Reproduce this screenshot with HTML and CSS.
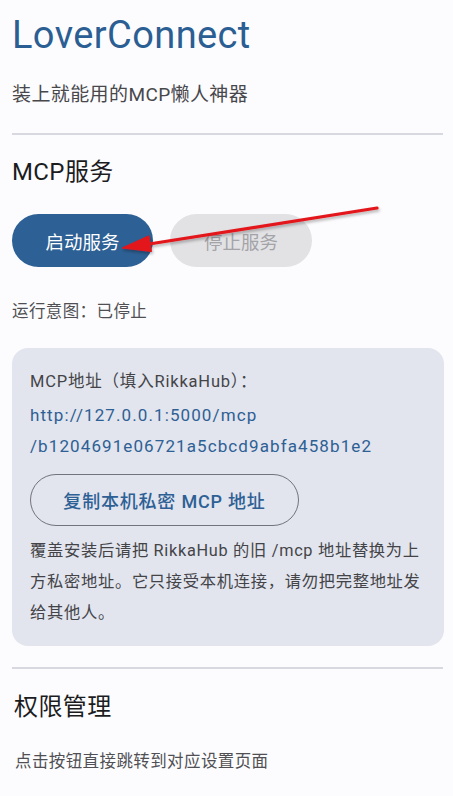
FILE: index.html
```html
<!DOCTYPE html>
<html lang="zh-CN">
<head>
    <meta charset="UTF-8">
    <meta name="viewport" content="width=device-width, initial-scale=1.0">
    <title>LoverConnect</title>
    <link rel="stylesheet" href="styles.css">
</head>
<body>
    <div class="page">
        <h1 class="app-title">LoverConnect</h1>
        <p class="app-sub">装上就能用的MCP懒人神器</p>
        <hr class="divider">

        <h2 class="section-title">MCP服务</h2>
        <div class="btn-row">
            <button class="btn btn-start">启动服务</button>
            <button class="btn btn-stop" disabled>停止服务</button>
        </div>
        <p class="status">运行意图：已停止</p>

        <div class="card">
            <div class="card-label">MCP地址（填入RikkaHub）：</div>
            <div class="card-url">http://127.0.0.1:5000/mcp<wbr>/b1204691e06721a5cbcd9abfa458b1e2</div>
            <button class="btn-outline">复制本机私密 MCP 地址</button>
            <p class="card-note">覆盖安装后请把 RikkaHub 的旧 /mcp 地址替换为上方私密地址。它只接受本机连接，请勿把完整地址发给其他人。</p>
        </div>

        <hr class="divider divider-2">

        <h2 class="section-title perm-title">权限管理</h2>
        <p class="status perm-hint">点击按钮直接跳转到对应设置页面</p>

        <!-- annotation arrow drawn over the screenshot -->
        <svg class="arrow" width="453" height="796" viewBox="0 0 453 796">
            <defs>
                <filter id="shadow" x="-10%" y="-50%" width="120%" height="200%">
                    <feDropShadow dx="1" dy="2" stdDeviation="1.5" flood-color="#000" flood-opacity="0.3"/>
                </filter>
            </defs>
            <g filter="url(#shadow)" fill="#e3161b" stroke="#e3161b">
                <line x1="377" y1="208" x2="146" y2="244.5" stroke-width="3.2" stroke-linecap="round"/>
                <polygon points="122,248 151.5,251.5 148.8,235.8" stroke-width="1" stroke-linejoin="round"/>
            </g>
        </svg>
    </div>
</body>
</html>
```

FILE: styles.css
```css
* {
    box-sizing: border-box;
}
body {
    margin: 0;
    background: #fcfcfe;
    font-family: Roboto, "Noto Sans CJK SC", sans-serif;
    color: #1c1c1e;
}
.page {
    position: relative;
    padding: 12px 9px 0 12px;
    min-height: 796px;
}
.app-title {
    margin: 0;
    font-size: 38px;
    line-height: 46px;
    font-weight: 400;
    letter-spacing: 0.4px;
    color: #2b5e93;
}
.app-sub {
    margin: 23px 0 0;
    font-size: 19px;
    line-height: 28px;
    letter-spacing: 0.4px;
    color: #48484c;
}
.divider {
    margin: 24px 1px 0 0;
    border: none;
    height: 2px;
    background: #d8d8e0;
}
.section-title {
    margin: 21px 0 0;
    font-size: 24px;
    line-height: 32px;
    font-weight: 400;
    letter-spacing: 0.4px;
    color: #1c1c1e;
}
.btn-row {
    display: flex;
    gap: 17px;
    margin-top: 26px;
}
.btn {
    width: 141px;
    height: 53px;
    border: none;
    border-radius: 27px;
    font-family: inherit;
    font-size: 18.5px;
    cursor: pointer;
}
.btn-start {
    background: #2d6094;
    color: #fff;
}
.btn-stop {
    width: 142px;
    background: #e2e2e5;
    color: #a4a4a8;
    cursor: default;
}
.status {
    margin: 33px 0 0;
    font-size: 16.5px;
    line-height: 24px;
    letter-spacing: 0.4px;
    color: #505054;
}
.card {
    margin-top: 24px;
    background: #e2e4ee;
    border-radius: 16px;
    padding: 19px 16px 18px 18px;
}
.card-label {
    font-size: 16.5px;
    line-height: 30px;
    letter-spacing: 0.8px;
    color: #444448;
}
.card-url {
    margin-top: 3px;
    font-size: 17px;
    line-height: 31px;
    letter-spacing: 1.1px;
    color: #2d6094;
}
.btn-outline {
    display: block;
    margin-top: 12px;
    width: 269px;
    height: 52px;
    background: transparent;
    border: 1px solid #72737c;
    border-radius: 26px;
    font-family: inherit;
    font-size: 18px;
    font-weight: 500;
    letter-spacing: 0.8px;
    color: #2d6094;
    cursor: pointer;
}
.card-note {
    margin: 9px 0 0;
    font-size: 16.3px;
    line-height: 31px;
    letter-spacing: 0.7px;
    color: #444448;
}
.divider-2 {
    margin-top: 21px;
}
.perm-title {
    margin-top: 22px;
    padding-left: 2px;
}
.perm-hint {
    margin-top: 27px;
    padding-left: 3px;
}
.arrow {
    position: absolute;
    left: 0;
    top: 0;
    pointer-events: none;
}
```
